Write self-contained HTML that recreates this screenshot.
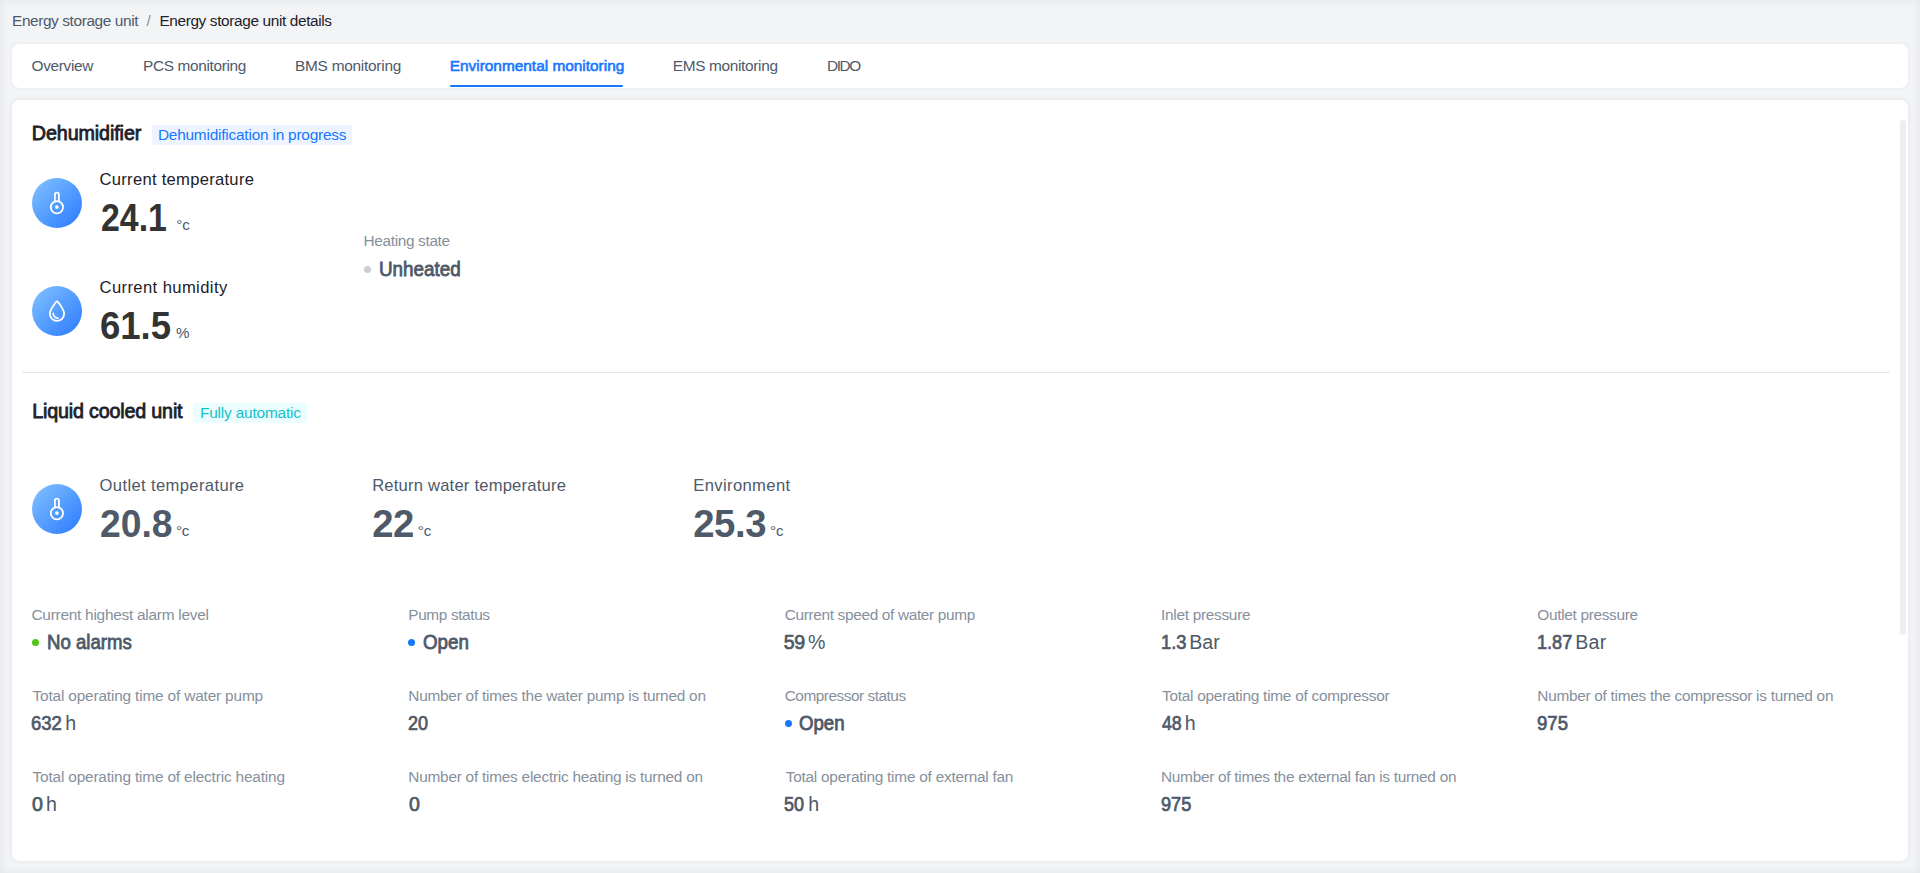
<!DOCTYPE html>
<html><head><meta charset="utf-8">
<style>
html,body{margin:0;padding:0;width:1920px;height:873px;overflow:hidden;background:#f3f4f6;}
body{position:relative;font-family:"Liberation Sans",sans-serif;}
.shade{position:absolute;left:0;top:0;width:1920px;height:873px;box-shadow:inset 0 0 8px rgba(30,40,60,0.08);pointer-events:none;z-index:5}
.card{position:absolute;background:#fff;border-radius:8px;}
.tabs{left:12px;top:44px;width:1896px;height:44px;box-shadow:0 0 4px rgba(30,40,60,0.05);}
.main{left:12px;top:100px;width:1896px;height:761px;box-shadow:0 0 5px rgba(30,40,60,0.08);}
.ul{position:absolute;left:450px;top:85px;width:173px;height:2px;background:#1677ff;border-radius:1px}
.tag{position:absolute;border-radius:3px}
.icon{position:absolute;width:50px;height:50px;border-radius:50%;background:linear-gradient(135deg,#86c3ff 0%,#5aa2ff 45%,#2a78ff 100%);}
.icon svg{position:absolute;left:0;top:0}
.dot{position:absolute;width:7px;height:7px;border-radius:50%}
.div{position:absolute;left:22px;top:372px;width:1868px;height:1px;background:#e5e6eb}
.sb{position:absolute;left:1900px;top:120px;width:6px;height:515px;border-radius:3px;background:#eeeeee}
.t{position:absolute;line-height:1;transform-origin:0 0;white-space:nowrap;font-family:"Liberation Sans",sans-serif}
</style></head><body>
<div class="card tabs"></div>
<div class="ul"></div>
<div class="card main"></div>
<div class="sb"></div>
<div class="tag" style="left:152px;top:125px;width:200px;height:20px;background:#edf4ff"></div>
<div class="tag" style="left:193px;top:403px;width:114px;height:20px;background:#ebfdfe"></div>
<div class="icon" style="left:32px;top:178px"><svg width="50" height="50" viewBox="0 0 50 50"><path d="M22.9 23.4 V16.6 a2 2 0 0 1 4 0 V23.4" fill="none" stroke="#fff" stroke-width="1.8"/><circle cx="24.9" cy="29.2" r="6.1" fill="none" stroke="#fff" stroke-width="1.8"/><circle cx="24.9" cy="29.1" r="1.85" fill="#fff"/></svg></div>
<div class="icon" style="left:32px;top:286px"><svg width="50" height="50" viewBox="0 0 50 50"><path d="M23.9 16.2 Q25 14.6 26.1 16.2 C28.6 19.6 32.1 23.8 32.1 27.8 A7.1 7.1 0 0 1 17.9 27.8 C17.9 23.8 21.4 19.6 23.9 16.2 Z" fill="none" stroke="#fff" stroke-width="1.8" stroke-linejoin="round"/><path d="M21.2 27.4 A5.2 5.2 0 0 0 26.2 32.3" fill="none" stroke="#fff" stroke-width="1.6" stroke-linecap="round"/></svg></div>
<div class="icon" style="left:32px;top:484px"><svg width="50" height="50" viewBox="0 0 50 50"><path d="M22.9 23.4 V16.6 a2 2 0 0 1 4 0 V23.4" fill="none" stroke="#fff" stroke-width="1.8"/><circle cx="24.9" cy="29.2" r="6.1" fill="none" stroke="#fff" stroke-width="1.8"/><circle cx="24.9" cy="29.1" r="1.85" fill="#fff"/></svg></div>
<div class="dot" style="left:364px;top:266px;width:7px;height:7px;background:#c9cdd4"></div>
<div class="div"></div>
<div class="dot" style="left:32px;top:639px;background:#52c41a"></div>
<div class="dot" style="left:408px;top:639px;background:#1677ff"></div>
<div class="dot" style="left:785px;top:720px;background:#1677ff"></div>
<div class="t" style="left:12.00px;top:13px;font-size:15.4px;font-weight:400;letter-spacing:-0.389px;color:#4e5969">Energy storage unit</div>
<div class="t" style="left:146.40px;top:13px;font-size:15.4px;font-weight:400;letter-spacing:0px;color:#86909c">/</div>
<div class="t" style="left:159.40px;top:13px;font-size:15.4px;font-weight:400;letter-spacing:-0.369px;color:#1d2129">Energy storage unit details</div>
<div class="t" style="left:31.50px;top:58px;font-size:15.4px;font-weight:400;letter-spacing:-0.314px;color:#4e5969">Overview</div>
<div class="t" style="left:143.00px;top:58px;font-size:15.4px;font-weight:400;letter-spacing:-0.338px;color:#4e5969">PCS monitoring</div>
<div class="t" style="left:295.00px;top:58px;font-size:15.4px;font-weight:400;letter-spacing:-0.246px;color:#4e5969">BMS monitoring</div>
<div class="t" style="left:449.75px;top:58px;font-size:15.4px;font-weight:400;letter-spacing:0.0px;color:#1677ff;-webkit-text-stroke:0.6px #1677ff">Environmental monitoring</div>
<div class="t" style="left:672.75px;top:58px;font-size:15.4px;font-weight:400;letter-spacing:-0.327px;color:#4e5969">EMS monitoring</div>
<div class="t" style="left:827.00px;top:58px;font-size:15.4px;font-weight:400;letter-spacing:-1.417px;color:#4e5969">DIDO</div>
<div class="t" style="left:31.80px;top:124px;font-size:19.7px;font-weight:400;letter-spacing:-0.091px;color:#1d2129;-webkit-text-stroke:0.8px #1d2129">Dehumidifier</div>
<div class="t" style="left:157.90px;top:127px;font-size:15.4px;font-weight:400;letter-spacing:-0.207px;color:#1677ff">Dehumidification in progress</div>
<div class="t" style="left:99.50px;top:172px;font-size:16.6px;font-weight:400;letter-spacing:0.278px;color:#1d2129">Current temperature</div>
<div class="t" style="left:100.92px;top:199px;font-size:38.3px;font-weight:700;letter-spacing:0px;color:#333333;transform:scaleX(0.8836)">24.1</div>
<div class="t" style="left:176.30px;top:217px;font-size:15.2px;font-weight:400;letter-spacing:0.0px;color:#4e5969">°c</div>
<div class="t" style="left:99.50px;top:280px;font-size:16.6px;font-weight:400;letter-spacing:0.4px;color:#1d2129">Current humidity</div>
<div class="t" style="left:100.25px;top:307px;font-size:38.3px;font-weight:700;letter-spacing:0px;color:#333333;transform:scaleX(0.9534)">61.5</div>
<div class="t" style="left:176.00px;top:325px;font-size:15.2px;font-weight:400;letter-spacing:0px;color:#4e5969">%</div>
<div class="t" style="left:363.50px;top:233px;font-size:15.4px;font-weight:400;letter-spacing:-0.342px;color:#86909c">Heating state</div>
<div class="t" style="left:378.85px;top:260px;font-size:19.8px;font-weight:400;letter-spacing:0px;color:#4e5969;transform:scaleX(0.9524);-webkit-text-stroke:0.8px #4e5969">Unheated</div>
<div class="t" style="left:32.30px;top:402px;font-size:19.7px;font-weight:400;letter-spacing:-0.176px;color:#1d2129;-webkit-text-stroke:0.8px #1d2129">Liquid cooled unit</div>
<div class="t" style="left:200.00px;top:405px;font-size:15.4px;font-weight:400;letter-spacing:-0.179px;color:#14c2cc">Fully automatic</div>
<div class="t" style="left:99.60px;top:478px;font-size:16.6px;font-weight:400;letter-spacing:0.362px;color:#4e5969">Outlet temperature</div>
<div class="t" style="left:100.28px;top:505px;font-size:38.3px;font-weight:700;letter-spacing:0px;color:#4e5969;transform:scaleX(0.9722)">20.8</div>
<div class="t" style="left:175.90px;top:523px;font-size:15.2px;font-weight:400;letter-spacing:-0.15px;color:#4e5969">°c</div>
<div class="t" style="left:372.20px;top:478px;font-size:16.6px;font-weight:400;letter-spacing:0.2px;color:#4e5969">Return water temperature</div>
<div class="t" style="left:372.20px;top:505px;font-size:38.3px;font-weight:700;letter-spacing:-0.5px;color:#4e5969">22</div>
<div class="t" style="left:417.70px;top:523px;font-size:15.2px;font-weight:400;letter-spacing:0.0px;color:#4e5969">°c</div>
<div class="t" style="left:693.20px;top:478px;font-size:16.6px;font-weight:400;letter-spacing:0.38px;color:#4e5969">Environment</div>
<div class="t" style="left:693.20px;top:505px;font-size:38.3px;font-weight:700;letter-spacing:-0.433px;color:#4e5969">25.3</div>
<div class="t" style="left:769.90px;top:523px;font-size:15.2px;font-weight:400;letter-spacing:0.0px;color:#4e5969">°c</div>
<div class="t" style="left:31.50px;top:607px;font-size:15.4px;font-weight:400;letter-spacing:-0.25px;color:#86909c">Current highest alarm level</div>
<div class="t" style="left:408.30px;top:607px;font-size:15.4px;font-weight:400;letter-spacing:-0.38px;color:#86909c">Pump status</div>
<div class="t" style="left:784.70px;top:607px;font-size:15.4px;font-weight:400;letter-spacing:-0.335px;color:#86909c">Current speed of water pump</div>
<div class="t" style="left:1161.00px;top:607px;font-size:15.4px;font-weight:400;letter-spacing:-0.285px;color:#86909c">Inlet pressure</div>
<div class="t" style="left:1537.30px;top:607px;font-size:15.4px;font-weight:400;letter-spacing:-0.321px;color:#86909c">Outlet pressure</div>
<div class="t" style="left:32.50px;top:688px;font-size:15.4px;font-weight:400;letter-spacing:-0.167px;color:#86909c">Total operating time of water pump</div>
<div class="t" style="left:408.30px;top:688px;font-size:15.4px;font-weight:400;letter-spacing:-0.245px;color:#86909c">Number of times the water pump is turned on</div>
<div class="t" style="left:784.70px;top:688px;font-size:15.4px;font-weight:400;letter-spacing:-0.481px;color:#86909c">Compressor status</div>
<div class="t" style="left:1162.00px;top:688px;font-size:15.4px;font-weight:400;letter-spacing:-0.258px;color:#86909c">Total operating time of compressor</div>
<div class="t" style="left:1537.30px;top:688px;font-size:15.4px;font-weight:400;letter-spacing:-0.281px;color:#86909c">Number of times the compressor is turned on</div>
<div class="t" style="left:32.50px;top:769px;font-size:15.4px;font-weight:400;letter-spacing:-0.173px;color:#86909c">Total operating time of electric heating</div>
<div class="t" style="left:408.30px;top:769px;font-size:15.4px;font-weight:400;letter-spacing:-0.241px;color:#86909c">Number of times electric heating is turned on</div>
<div class="t" style="left:785.70px;top:769px;font-size:15.4px;font-weight:400;letter-spacing:-0.24px;color:#86909c">Total operating time of external fan</div>
<div class="t" style="left:1161.00px;top:769px;font-size:15.4px;font-weight:400;letter-spacing:-0.284px;color:#86909c">Number of times the external fan is turned on</div>
<div class="t" style="left:47.26px;top:633px;font-size:19.8px;font-weight:400;letter-spacing:0px;color:#4e5969;transform:scaleX(0.9416);-webkit-text-stroke:0.8px #4e5969">No alarms</div>
<div class="t" style="left:422.80px;top:633px;font-size:19.8px;font-weight:400;letter-spacing:0px;color:#4e5969;transform:scaleX(0.9468);-webkit-text-stroke:0.8px #4e5969">Open</div>
<div class="t" style="left:783.70px;top:633px;font-size:19.6px;font-weight:400;letter-spacing:-0.4px;color:#4e5969;-webkit-text-stroke:0.7px #4e5969">59</div>
<div class="t" style="left:807.90px;top:633px;font-size:19.6px;font-weight:400;letter-spacing:0px;color:#4e5969">%</div>
<div class="t" style="left:1161.07px;top:633px;font-size:19.6px;font-weight:400;letter-spacing:0px;color:#4e5969;transform:scaleX(0.9327);-webkit-text-stroke:0.7px #4e5969">1.3</div>
<div class="t" style="left:1189.25px;top:633px;font-size:19.6px;font-weight:400;letter-spacing:0.025px;color:#4e5969">Bar</div>
<div class="t" style="left:1537.08px;top:633px;font-size:19.6px;font-weight:400;letter-spacing:0px;color:#4e5969;transform:scaleX(0.9243);-webkit-text-stroke:0.7px #4e5969">1.87</div>
<div class="t" style="left:1575.30px;top:633px;font-size:19.6px;font-weight:400;letter-spacing:0.2px;color:#4e5969">Bar</div>
<div class="t" style="left:31.06px;top:714px;font-size:19.6px;font-weight:400;letter-spacing:0px;color:#4e5969;transform:scaleX(0.9435);-webkit-text-stroke:0.7px #4e5969">632</div>
<div class="t" style="left:65.25px;top:714px;font-size:19.6px;font-weight:400;letter-spacing:0px;color:#4e5969">h</div>
<div class="t" style="left:408.08px;top:714px;font-size:19.6px;font-weight:400;letter-spacing:0px;color:#4e5969;transform:scaleX(0.919);-webkit-text-stroke:0.7px #4e5969">20</div>
<div class="t" style="left:799.06px;top:714px;font-size:19.8px;font-weight:400;letter-spacing:0px;color:#4e5969;transform:scaleX(0.9426);-webkit-text-stroke:0.8px #4e5969">Open</div>
<div class="t" style="left:1162.00px;top:714px;font-size:19.6px;font-weight:400;letter-spacing:0px;color:#4e5969;transform:scaleX(0.9048);-webkit-text-stroke:0.7px #4e5969">48</div>
<div class="t" style="left:1184.70px;top:714px;font-size:19.6px;font-weight:400;letter-spacing:0px;color:#4e5969">h</div>
<div class="t" style="left:1537.05px;top:714px;font-size:19.6px;font-weight:400;letter-spacing:0px;color:#4e5969;transform:scaleX(0.9484);-webkit-text-stroke:0.7px #4e5969">975</div>
<div class="t" style="left:32.00px;top:795px;font-size:19.6px;font-weight:400;letter-spacing:0px;color:#4e5969;-webkit-text-stroke:0.7px #4e5969">0</div>
<div class="t" style="left:46.00px;top:795px;font-size:19.6px;font-weight:400;letter-spacing:0px;color:#4e5969">h</div>
<div class="t" style="left:409.00px;top:795px;font-size:19.6px;font-weight:400;letter-spacing:0px;color:#4e5969;-webkit-text-stroke:0.7px #4e5969">0</div>
<div class="t" style="left:784.08px;top:795px;font-size:19.6px;font-weight:400;letter-spacing:0px;color:#4e5969;transform:scaleX(0.919);-webkit-text-stroke:0.7px #4e5969">50</div>
<div class="t" style="left:808.30px;top:795px;font-size:19.6px;font-weight:400;letter-spacing:0px;color:#4e5969">h</div>
<div class="t" style="left:1161.07px;top:795px;font-size:19.6px;font-weight:400;letter-spacing:0px;color:#4e5969;transform:scaleX(0.929);-webkit-text-stroke:0.7px #4e5969">975</div>
<div class="shade"></div>
</body></html>
